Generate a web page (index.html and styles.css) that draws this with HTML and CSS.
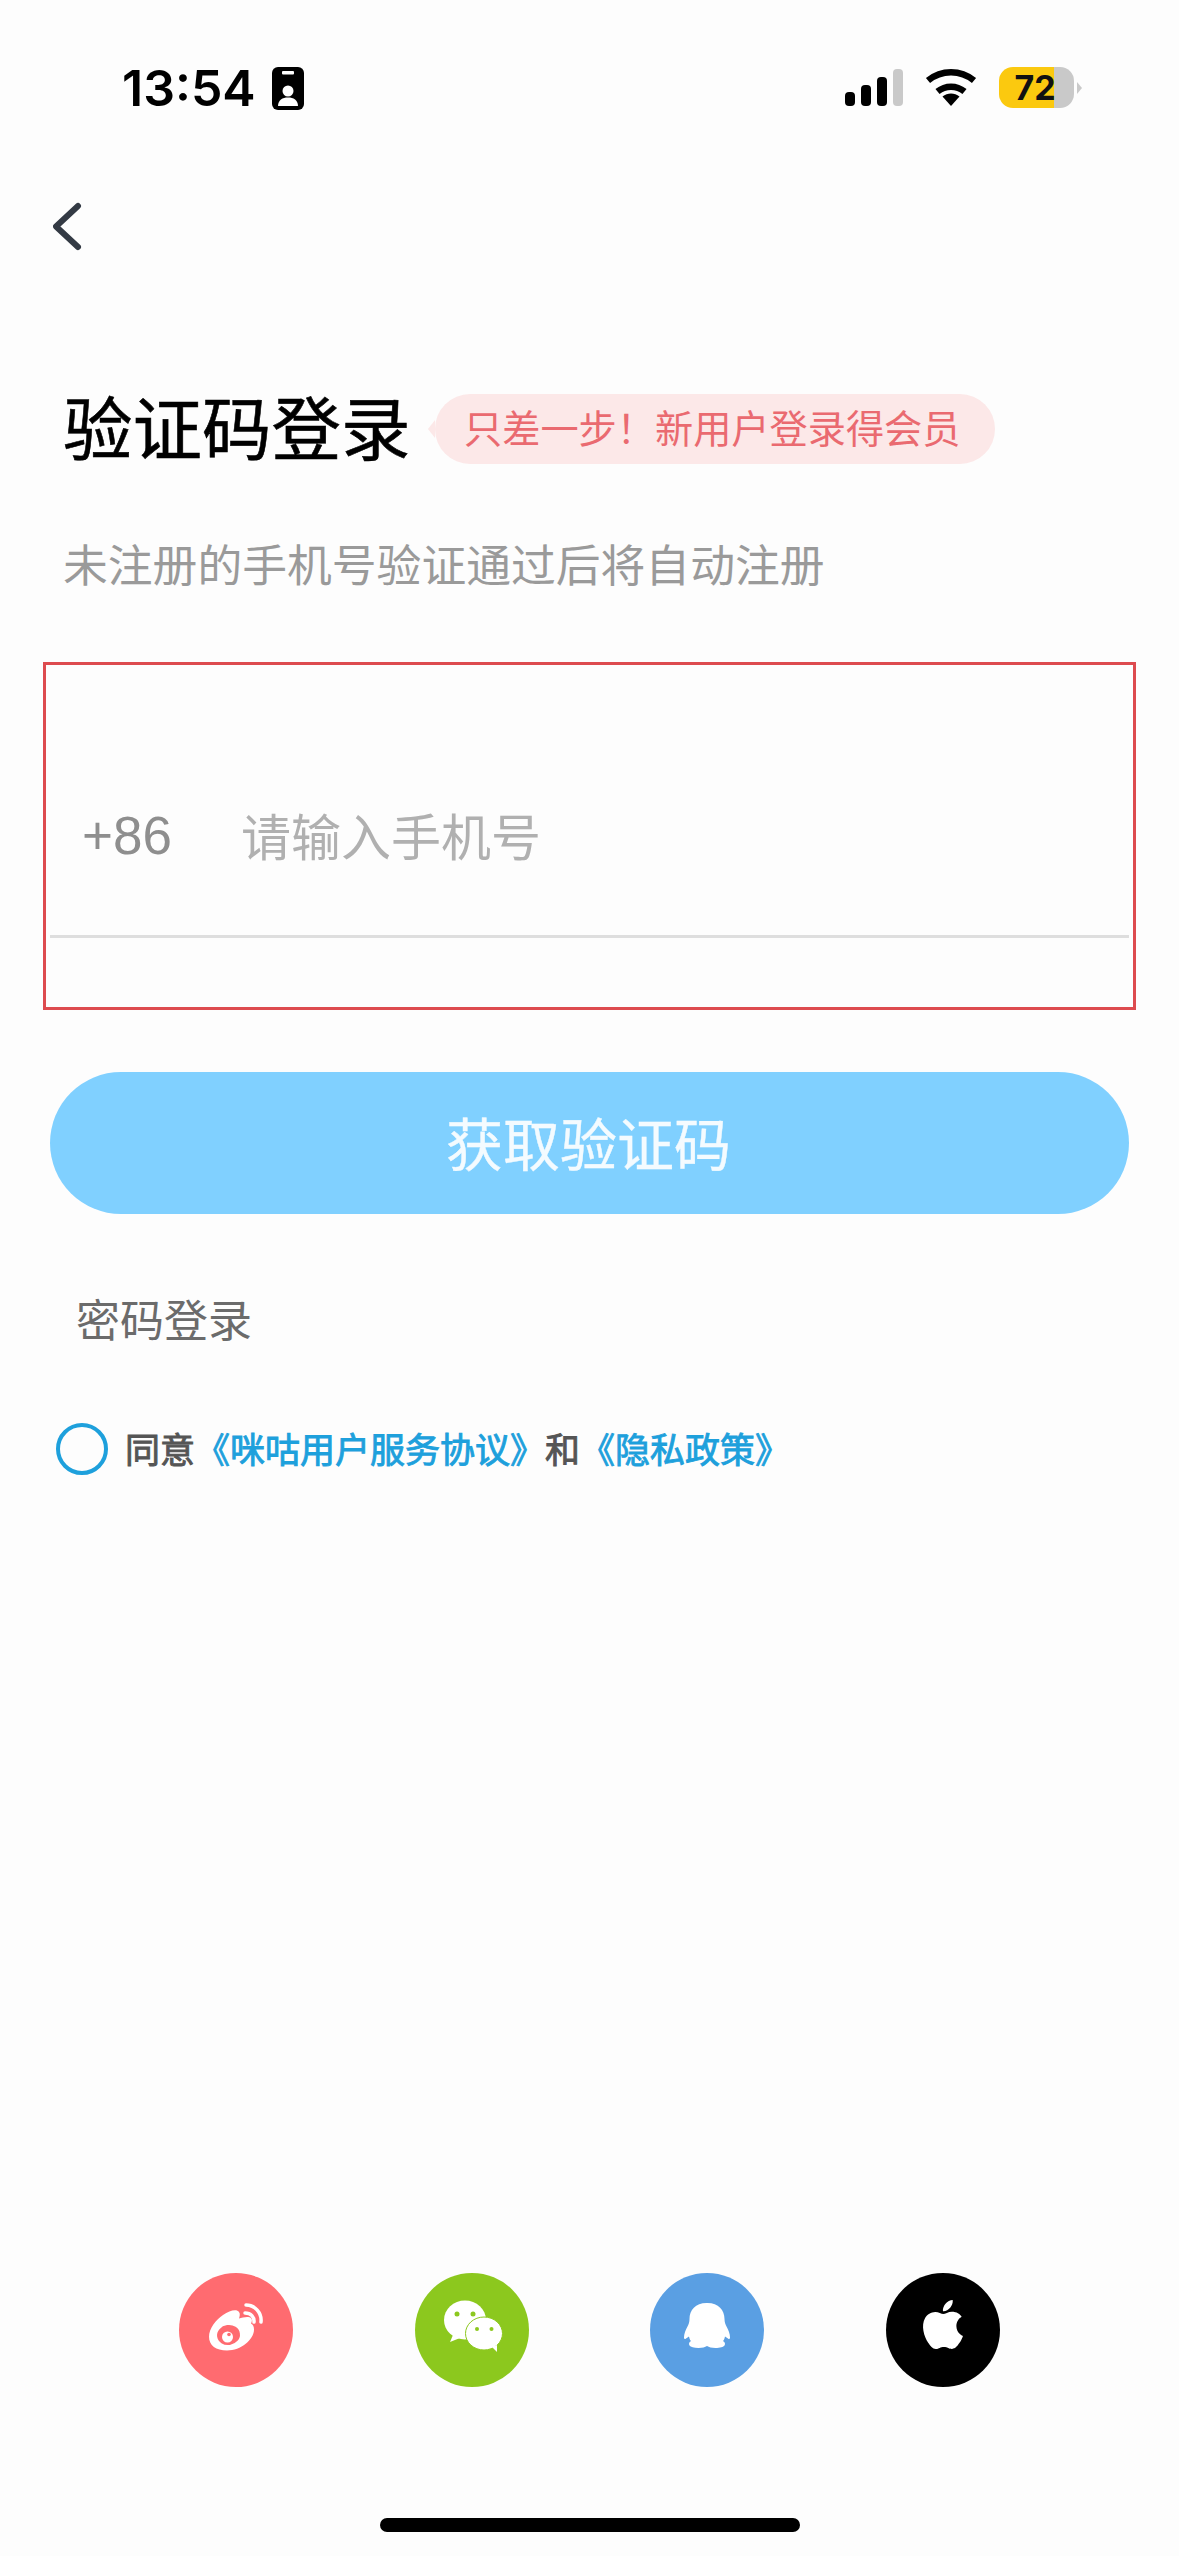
FILE: index.html
```html
<!DOCTYPE html>
<html lang="zh-CN">
  <head>
    <meta charset="UTF-8" />
    <meta name="viewport" content="width=device-width, initial-scale=1.0" />
    <title>验证码登录</title>
    <link rel="stylesheet" href="styles.css">
  </head>
  <body>
    <div class="page">
      <!-- Status bar -->
      <div class="status-bar">
        <div class="status-left">
          <span class="time">13:54</span>
          <svg class="id-icon" width="32" height="43" viewBox="0 0 32 43">
            <rect width="32" height="43" rx="6" fill="#000" />
            <rect x="10" y="4" width="12" height="3.5" rx="1" fill="#fff" />
            <circle cx="16" cy="24" r="5.5" fill="#fff" />
            <path d="M6 39c0-6 4.500-8.500 10-8.500s10 2.500 10 8.500z" fill="#fff" />
          </svg>
        </div>
        <div class="status-right">
          <div class="signal">
            <span class="bar bar-1"></span>
            <span class="bar bar-2"></span>
            <span class="bar bar-3"></span>
            <span class="bar bar-4"></span>
          </div>
          <svg class="wifi" width="52" height="37" viewBox="0 0 52 37">
            <path d="M26 37l-8.500-9.500c5-4 12-4 17 0z" fill="#000" />
            <path d="M12.500 22.500c8-6.500 19-6.500 27 0" fill="none" stroke="#000" stroke-width="6.500" />
            <path d="M3 11.500c13.500-11 32.500-11 46 0" fill="none" stroke="#000" stroke-width="6.500" />
          </svg>
          <div class="battery">
            <div class="battery-body">72</div>
            <span class="battery-tip"></span>
          </div>
        </div>
      </div>

      <!-- Back -->
      <div class="nav">
        <svg width="30" height="50" viewBox="0 0 30 50">
          <path d="M25 4L3 24.500 25 45" fill="none" stroke="#333a44" stroke-width="6" stroke-linecap="round" stroke-linejoin="round" />
        </svg>
      </div>

      <!-- Heading -->
      <div class="title-row">
        <h1 class="title">验证码登录</h1>
        <div class="promo">
          <span class="promo-tail"></span>
          <span class="promo-text">只差一步&#xFF01;新用户登录得会员</span>
        </div>
      </div>
      <p class="subtitle">未注册的手机号验证通过后将自动注册</p>

      <!-- Phone input -->
      <div class="phone-box">
        <div class="phone-row">
          <span class="country-code">+86</span>
          <span class="placeholder">请输入手机号</span>
        </div>
        <div class="divider"></div>
      </div>

      <button class="submit" type="button">获取验证码</button>

      <div class="password-link">密码登录</div>

      <div class="agreement">
        <span class="check"></span>
        <span class="agree-text">同意<a class="link">《咪咕用户服务协议》</a>和<a class="link">《隐私政策》</a></span>
      </div>

      <!-- Third party login -->
      <div class="socials">
        <div class="social weibo">
          <svg width="114" height="114" viewBox="0 0 114 114">
            <path d="M30 64c0-9 7-17 14-22 7-5 14-6 16-3 1.500 2 .500 4.500 0 6.500 4-1.500 10-2.500 12-.500 1.500 1.500 1 3.500 0 5.500 2 1 3 3 3 6 0 10-13 21-27 21-11 0-18-5-18-14z" fill="#fff" />
            <ellipse cx="49.500" cy="62" rx="11.500" ry="10" transform="rotate(-8 49.500 62)" fill="#ff6b70" />
            <circle cx="48.500" cy="64" r="5.500" fill="#fff" />
            <circle cx="50" cy="61.500" r="1.800" fill="#ff6b70" />
            <path d="M67 32c9 0 16 8 15 17" fill="none" stroke="#fff" stroke-width="3.500" stroke-linecap="round" />
            <path d="M66 40c6 0 9.500 4 9 9" fill="none" stroke="#fff" stroke-width="3.500" stroke-linecap="round" />
          </svg>
        </div>
        <div class="social wechat">
          <svg width="114" height="114" viewBox="0 0 114 114">
            <ellipse cx="50" cy="47" rx="21" ry="19.500" fill="#fff" />
            <path d="M38 62l-3 7 10-4z" fill="#fff" />
            <circle cx="42" cy="41" r="2.500" fill="#8cc81e" />
            <circle cx="58" cy="41" r="2.500" fill="#8cc81e" />
            <ellipse cx="69" cy="60.500" rx="18.500" ry="16.500" fill="#fff" stroke="#8cc81e" stroke-width="1" />
            <path d="M77 74l5 5 0-7z" fill="#fff" />
            <circle cx="62" cy="56" r="2" fill="#8cc81e" />
            <circle cx="76.500" cy="56" r="2" fill="#8cc81e" />
          </svg>
        </div>
        <div class="social qq">
          <svg width="114" height="114" viewBox="0 0 114 114">
            <path d="M56.500 30c-11 0-17 7-17 16 0 3-1 5.500-2 7.500-2 4-3.500 7-3.500 11 0 1.500 1 2 2 1l3-2c.500 2 1 3.500 2 4.500-2 1-2.500 3-1.500 4.500 1 1.500 4.500 2.500 9 2.500 4 0 6.500-1 8.500-2 2 1 4.500 2 8.500 2 4.500 0 8-1 9-2.500 1-1.500.500-3.500-1.500-4.500 1-1 1.500-2.500 2-4.500l3 2c1 1 2 .500 2-1 0-4-1.500-7-3.500-11-1-2-2-4.500-2-7.500 0-9-6-16-17-16z" fill="#fff" />
          </svg>
        </div>
        <div class="social apple">
          <svg width="114" height="114" viewBox="0 0 114 114">
            <path transform="translate(32.500 27) scale(2.040)" d="M12.152 6.896c-.948 0-2.415-1.078-3.960-1.040-2.040.027-3.910 1.183-4.961 3.014-2.117 3.675-.546 9.103 1.519 12.090 1.013 1.454 2.208 3.090 3.792 3.039 1.520-.065 2.090-.987 3.935-.987 1.831 0 2.350.987 3.960.948 1.637-.026 2.676-1.480 3.676-2.948 1.156-1.688 1.636-3.325 1.662-3.415-.039-.013-3.182-1.221-3.220-4.857-.026-3.040 2.480-4.494 2.597-4.559-1.429-2.090-3.623-2.324-4.390-2.376-2-.156-3.675 1.090-4.610 1.090zM15.530 3.830c.843-1.012 1.400-2.427 1.245-3.830-1.207.052-2.662.805-3.532 1.818-.780.896-1.454 2.338-1.273 3.714 1.338.104 2.715-.688 3.559-1.701" fill="#fff" />
          </svg>
        </div>
      </div>

      <div class="home-bar"></div>
    </div>
  </body>
</html>
```

FILE: styles.css
```css
* {
  box-sizing: border-box;
}
body {
  margin: 0;
  font-family: "Noto Sans CJK SC", "Noto Sans", sans-serif;
  background-color: #fdfdfd;
}
.page {
  display: flex;
  flex-direction: column;
  width: 1179px;
  height: 2556px;
  overflow: hidden;
  padding-bottom: 24px;
  background-color: #fdfdfd;
}

/* status bar */
.status-bar {
  display: flex;
  justify-content: space-between;
  height: 115px;
  padding: 67px 97px 0 122px;
}
.status-left {
  display: flex;
  align-items: center;
  gap: 16px;
  height: 43px;
}
.time {
  font-family: Inter, sans-serif;
  font-size: 50px;
  font-weight: 600;
  line-height: 43px;
  color: #000;
}
.status-right {
  display: flex;
  align-items: center;
  height: 41px;
}
.signal {
  display: flex;
  align-items: flex-end;
  gap: 6px;
  height: 37px;
  margin-right: 22px;
}
.bar {
  width: 10px;
  border-radius: 4px;
  background-color: #000;
}
.bar-1 {
  height: 14px;
}
.bar-2 {
  height: 21px;
}
.bar-3 {
  height: 29px;
}
.bar-4 {
  height: 37px;
  background-color: #c9c9c9;
}
.wifi {
  margin-right: 22px;
}
.battery {
  display: flex;
  align-items: center;
}
.battery-body {
  width: 75px;
  height: 41px;
  padding-right: 3px;
  border-radius: 14px;
  background: linear-gradient(to right, #fbc90f 55px, #c9c9c9 55px);
  font-family: Inter, sans-serif;
  font-size: 34px;
  font-weight: 700;
  line-height: 41px;
  text-align: center;
  color: #111;
}
.battery-tip {
  width: 0;
  height: 0;
  margin-left: 3px;
  border-top: 6px solid transparent;
  border-bottom: 6px solid transparent;
  border-left: 5px solid #c9c9c9;
}

/* header */
.nav {
  display: flex;
  height: 50px;
  margin-top: 87px;
  padding-left: 53px;
}
.title-row {
  display: flex;
  align-items: center;
  height: 70px;
  margin-top: 142px;
  padding-left: 63px;
}
.title {
  width: 350px;
  margin: -8px 0 0;
  font-size: 69.5px;
  font-weight: 400;
  line-height: 70px;
  color: #000;
  -webkit-text-stroke: 0.6px #000;
}
.promo {
  display: flex;
  align-items: center;
  margin-left: 15px;
}
.promo-tail {
  width: 0;
  height: 0;
  border-top: 9px solid transparent;
  border-bottom: 9px solid transparent;
  border-right: 7px solid #fce8e8;
}
.promo-text {
  width: 560px;
  height: 70px;
  padding-left: 29px;
  border-radius: 35px;
  background-color: #fce8e8;
  font-size: 38.2px;
  line-height: 66px;
  color: #ea6a70;
  white-space: nowrap;
}
.subtitle {
  height: 82px;
  margin: 58px 0 0;
  padding-left: 63px;
  font-size: 44.8px;
  line-height: 82px;
  color: #9a9a9a;
}

/* phone input */
.phone-box {
  display: flex;
  flex-direction: column;
  height: 348px;
  margin: 58px 43px 0;
  padding: 120px 4px 0;
  border: 3px solid #dd4b4f;
}
.phone-row {
  display: flex;
  align-items: center;
  height: 100px;
  padding-left: 32px;
}
.country-code {
  width: 159px;
  margin-top: 2px;
  font-family: "Liberation Sans", sans-serif;
  font-size: 53px;
  line-height: 100px;
  color: #8e8e8e;
}
.placeholder {
  margin-top: -2px;
  font-size: 50px;
  line-height: 100px;
  color: #b0b0b0;
}
.divider {
  height: 3px;
  margin-top: 50px;
  background-color: #dedede;
}

.submit {
  display: block;
  height: 142px;
  margin: 62px 50px 0;
  padding: 0 2px 4px 0;
  border: none;
  border-radius: 71px;
  background-color: #80d0ff;
  font-family: inherit;
  font-size: 57px;
  color: #f4fbff;
  -webkit-text-stroke: 0.4px #f4fbff;
}
.password-link {
  height: 60px;
  margin-top: 74px;
  padding-left: 76px;
  font-size: 44px;
  line-height: 60px;
  color: #6b6b6b;
}
.agreement {
  display: flex;
  align-items: center;
  height: 50px;
  margin-top: 76px;
  padding-left: 56px;
}
.check {
  width: 52px;
  height: 52px;
  border: 4px solid #1ea0dc;
  border-radius: 50%;
}
.agree-text {
  margin: -3px 0 0 17px;
  font-size: 35px;
  line-height: 50px;
  color: #555;
  white-space: nowrap;
  -webkit-text-stroke: 0.9px;
}
.link {
  color: #1ea0dc;
}

/* third party login */
.socials {
  display: flex;
  justify-content: center;
  gap: 121.6px;
  margin-top: auto;
}
.social {
  width: 114px;
  height: 114px;
  border-radius: 50%;
}
.social svg {
  display: block;
}
.weibo {
  background-color: #ff6b70;
}
.wechat {
  background-color: #8cc81e;
}
.qq {
  background-color: #5a9fe3;
}
.apple {
  background-color: #000;
}
.home-bar {
  width: 420px;
  height: 14px;
  margin: 131px auto 0;
  border-radius: 7px;
  background-color: #000;
}
```
